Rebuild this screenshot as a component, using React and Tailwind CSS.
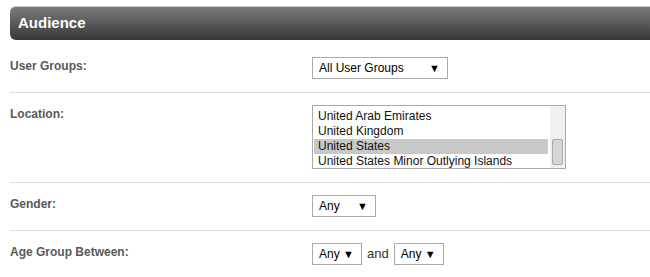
import React from "react";

const Dropdown = ({ label, width }) => (
  <div
    className={`flex items-center justify-between h-[22px] border border-[#a9a9a9] bg-white pl-[6px] pr-[7px] text-[12px] text-black ${width}`}
  >
    <span>{label}</span>
    <span className="text-[11px] leading-none">▼</span>
  </div>
);

const Row = ({ label, children, first }) => (
  <div
    className={`flex border-b border-[#dcdcdc] pb-[13px] ${first ? "pt-[17px]" : "pt-3"}`}
  >
    <div className="w-[302px] shrink-0 pt-[2px] text-[12px] font-bold leading-[14px] text-[#595959]">
      {label}
    </div>
    <div className="flex items-center">{children}</div>
  </div>
);

const countries = [
  "United Arab Emirates",
  "United Kingdom",
  "United States",
  "United States Minor Outlying Islands",
];

export default function App() {
  return (
    <div
      className="w-[650px] h-[277px] overflow-hidden bg-white pl-[10px] pt-[6px]"
      style={{ fontFamily: '"Liberation Sans", Arial, sans-serif' }}
    >
      <div className="h-[34px] rounded-l-[6px] border-t border-[#c4c4c4] bg-gradient-to-b from-[#7c7c7e] to-[#38383a] pl-2 flex items-center">
        <span className="text-[15px] font-bold text-white">Audience</span>
      </div>

      <Row label="User Groups:" first>
        <Dropdown label="All User Groups" width="w-[136px]" />
      </Row>

      <Row label="Location:">
        <div className="flex h-[64px] w-[254px] border border-[#a9a9a9] bg-white">
          <div className="flex-1 pt-[3px] pl-[1px] text-[12px] leading-[15px] text-[#111]">
            {countries.map((c) => (
              <div
                key={c}
                className={`pl-[4px] ${c === "United States" ? "bg-[#c8c8c8]" : ""}`}
              >
                {c}
              </div>
            ))}
          </div>
          <div className="ml-[2px] w-[15px] bg-[#f0f0f0] pl-[2px] pt-[33px]">
            <div className="h-[26px] w-[11px] rounded-[2px] border border-[#a8a8a8] bg-[#d6d6d6]" />
          </div>
        </div>
      </Row>

      <Row label="Gender:">
        <Dropdown label="Any" width="w-[64px]" />
      </Row>

      <Row label="Age Group Between:">
        <Dropdown label="Any" width="w-[50px]" />
        <span className="mx-[5px] text-[13px] text-[#333]">and</span>
        <Dropdown label="Any" width="w-[50px]" />
      </Row>
    </div>
  );
}
